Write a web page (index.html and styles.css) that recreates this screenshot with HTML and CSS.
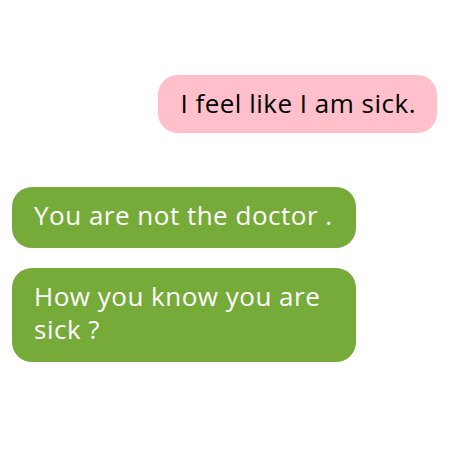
FILE: index.html
```html
<!DOCTYPE html>
<html>
<head>
<meta charset="utf-8">
<link rel="stylesheet" href="styles.css">
</head>
<body>
<div class="chat">
  <div class="row row-right">
    <div class="bubble bubble-me">I feel like I am sick.</div>
  </div>
  <div class="row row-left first-left">
    <div class="bubble bubble-other">You are not the doctor .</div>
  </div>
  <div class="row row-left">
    <div class="bubble bubble-other">How you know you are sick ?</div>
  </div>
</div>
</body>
</html>
```
FILE: styles.css
```css
html, body {
  margin: 0;
  padding: 0;
  background: #ffffff;
}
.chat {
  width: 450px;
  height: 450px;
  padding: 75px 13px 0 12px;
  box-sizing: border-box;
  display: flex;
  flex-direction: column;
  font-family: "Open Sans", sans-serif;
  font-size: 26px;
  line-height: 33px;
  letter-spacing: 0.5px;
}
.row {
  display: flex;
}
.row-right {
  justify-content: flex-end;
}
.row-left {
  justify-content: flex-start;
  margin-top: 20px;
}
.first-left {
  margin-top: 54px;
}
.bubble {
  border-radius: 20px;
  box-sizing: border-box;
}
.bubble-me {
  background: #ffc0cb;
  color: #000000;
  padding: 12px 21px 13px 22px;
}
.bubble-other {
  background: #76ab3a;
  color: #ffffff;
  width: 344px;
  padding: 12px 22px 16px 22px;
}
```
